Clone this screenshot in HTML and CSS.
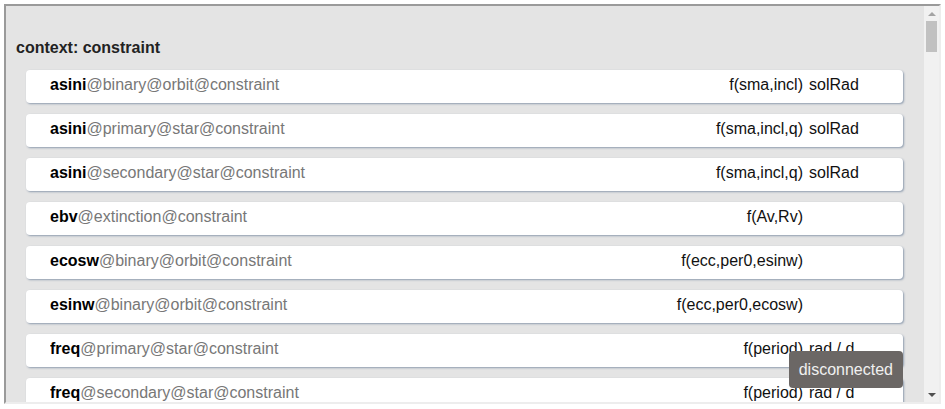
FILE: index.html
```html
<!DOCTYPE html>
<html lang="en">
<head>
<meta charset="utf-8">
<title>constraints</title>
<link rel="stylesheet" href="styles.css">
</head>
<body>
<div class="panel">
  <div class="content">
    <h4 class="context">context: constraint</h4>
    <ul class="params">
      <li class="param"><span class="name"><b>asini</b>@binary@orbit@constraint</span><span class="value">f(sma,incl)</span><span class="unit">solRad</span></li>
      <li class="param"><span class="name"><b>asini</b>@primary@star@constraint</span><span class="value">f(sma,incl,q)</span><span class="unit">solRad</span></li>
      <li class="param"><span class="name"><b>asini</b>@secondary@star@constraint</span><span class="value">f(sma,incl,q)</span><span class="unit">solRad</span></li>
      <li class="param"><span class="name"><b>ebv</b>@extinction@constraint</span><span class="value">f(Av,Rv)</span><span class="unit"></span></li>
      <li class="param"><span class="name"><b>ecosw</b>@binary@orbit@constraint</span><span class="value">f(ecc,per0,esinw)</span><span class="unit"></span></li>
      <li class="param"><span class="name"><b>esinw</b>@binary@orbit@constraint</span><span class="value">f(ecc,per0,ecosw)</span><span class="unit"></span></li>
      <li class="param"><span class="name"><b>freq</b>@primary@star@constraint</span><span class="value">f(period)</span><span class="unit">rad / d</span></li>
      <li class="param"><span class="name"><b>freq</b>@secondary@star@constraint</span><span class="value">f(period)</span><span class="unit">rad / d</span></li>
    </ul>
  </div>
  <div class="scrollbar">
    <div class="sb-button"><span class="arrow-up"></span></div>
    <div class="sb-track"><div class="sb-thumb"></div></div>
    <div class="sb-button"><span class="arrow-down"></span></div>
  </div>
</div>
<div class="status">disconnected</div>
</body>
</html>
```

FILE: styles.css
```css
html, body {
  background: #ffffff;
}

body {
  margin: 4px;
  font-family: "Liberation Sans", Arial, sans-serif;
  font-size: 16px;
  line-height: 23px;
  color: #111111;
}

.panel {
  box-sizing: border-box;
  height: 400px;
  display: flex;
  border-style: solid;
  border-width: 2px;
  border-color: #9a9a9a #ededed #ededed #9a9a9a;
  background: #e4e4e4;
  overflow: hidden;
}

.content {
  flex: 1;
  min-width: 0;
  overflow: hidden;
  padding: 30px 10px 0 10px;
}

.scrollbar {
  flex: none;
  width: 15px;
  display: flex;
  flex-direction: column;
  background: #f1f1f1;
}

.sb-button {
  flex: none;
  height: 15px;
  display: flex;
  align-items: center;
  justify-content: center;
}

.arrow-up {
  width: 0;
  height: 0;
  border-left: 4px solid transparent;
  border-right: 4px solid transparent;
  border-bottom: 4px solid #a3a3a3;
}

.arrow-down {
  width: 0;
  height: 0;
  border-left: 4px solid transparent;
  border-right: 4px solid transparent;
  border-top: 4px solid #505050;
}

.sb-track {
  flex: 1;
  padding: 0 2px;
}

.sb-thumb {
  height: 31px;
  background: #c1c1c1;
}

.context {
  margin: 0;
  font-size: 16px;
  font-weight: bold;
  color: #222222;
  line-height: 23px;
}

.params {
  list-style: none;
  margin: 11px 11px 0 10px;
  padding: 0;
}

.param {
  display: flex;
  align-items: baseline;
  height: 33px;
  box-sizing: border-box;
  padding: 3px 0 7px 24px;
  margin-bottom: 11px;
  background: #ffffff;
  border-radius: 4px;
  box-shadow: 1px 1px 2px rgba(40, 70, 110, 0.45);
  white-space: nowrap;
}

.name {
  flex: 1;
  color: #777777;
  overflow: hidden;
}

.name b {
  color: #000000;
}

.value {
  text-align: right;
  color: #111111;
}

.unit {
  flex: none;
  width: 100px;
  box-sizing: border-box;
  padding-left: 6px;
  color: #111111;
}

.status {
  position: fixed;
  right: 42px;
  bottom: 21px;
  height: 37px;
  line-height: 37px;
  padding: 0 10px;
  background: #6b6765;
  color: #f0f0f0;
  border-radius: 4px;
  font-size: 16px;
}
```
